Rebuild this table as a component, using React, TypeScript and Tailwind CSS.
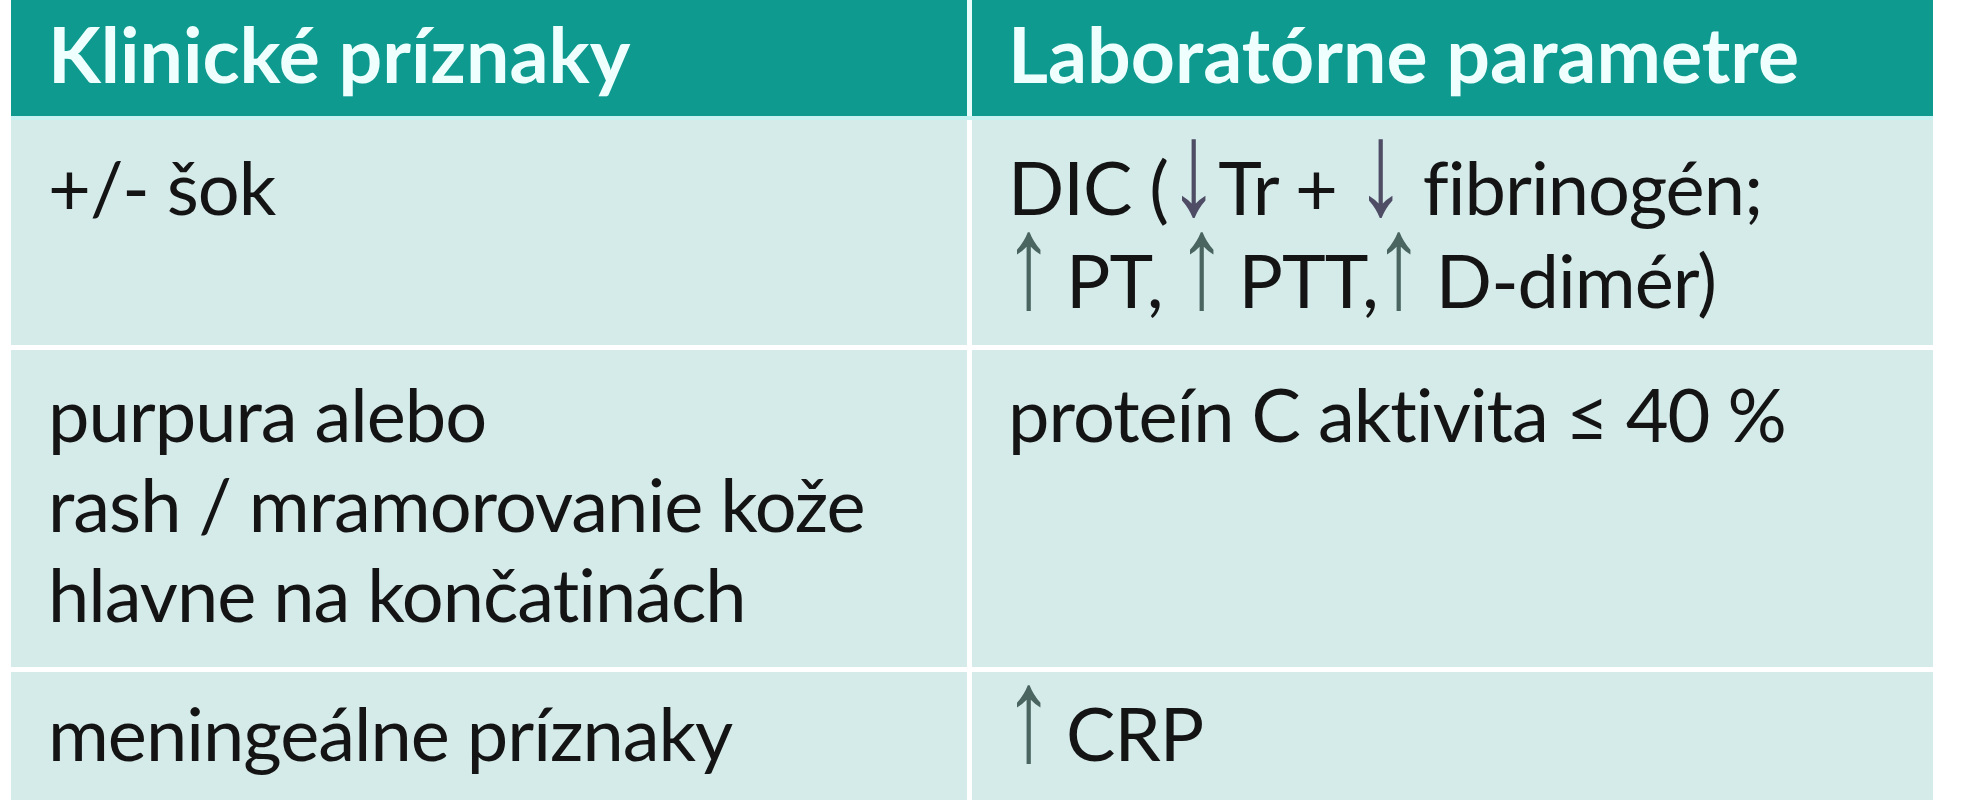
// arrows are taller than caps in the reference, so the glyph gets scaled
const arrow = "inline-block font-['Liberation_Sans',sans-serif] origin-[50%_71px] scale-x-[1.35] scale-y-[1.8]";
const Up = () => <span className={`${arrow} mx-[2px] text-[#4a6460]`}>↑</span>;
const Down = () => <span className={`${arrow} mx-[7px] text-[#4f4d66]`}>↓</span>;

const rows = [
  {
    h: "h-[225px]",
    pt: "pt-[22px]",
    left: ["+/- šok"],
    right: [
      <>DIC (<Down />Tr + <Down /> fibrinogén;</>,
      <><Up /> PT, <Up /> PTT,<Up /> D-dimér)</>,
    ],
  },
  {
    h: "h-[317px]",
    pt: "pt-[19px]",
    left: ["purpura alebo", "rash / mramorovanie kože", "hlavne na končatinách"],
    right: ["proteín C aktivita ≤ 40 %"],
  },
  {
    h: "h-[128px]",
    pt: "pt-[16px]",
    left: ["meningeálne príznaky"],
    right: [<><Up /> CRP</>],
  },
];

export default function App() {
  return (
    <div className="w-[1961px] h-[800px] overflow-hidden bg-white pl-[11px] font-['Lato',sans-serif]">
      <div className="w-[1922px] flex flex-col">
        <div className="flex gap-[5px] bg-[#e9fdfd] border-b-4 border-[#c6f3f1]">
          <div className="w-[956px] h-[116px] bg-[#0e9a8f] pl-[37px] pt-[7px] text-[77px] leading-[1.2] font-bold text-[#effffe]">
            Klinické príznaky
          </div>
          <div className="w-[961px] h-[116px] bg-[#0e9a8f] pl-[36px] pt-[7px] text-[77px] leading-[1.2] font-bold text-[#effffe]">
            Laboratórne parametre
          </div>
        </div>
        {rows.map((r, i) => (
          <div key={i} className={`flex gap-[5px] ${i > 0 ? "mt-[5px]" : ""}`}>
            <div className={`w-[956px] ${r.h} ${r.pt} bg-[#d5ebea] pl-[37px] text-[74px] leading-[90px] tracking-[-1px] text-[#141414]`}>
              {r.left.map((t, j) => (
                <div key={j} className="whitespace-nowrap">{t}</div>
              ))}
            </div>
            <div className={`w-[961px] ${r.h} ${r.pt} bg-[#d5ebea] pl-[36px] text-[74px] leading-[90px] tracking-[-1px] text-[#141414]`}>
              {r.right.map((t, j) => (
                <div key={j} className="whitespace-nowrap">{t}</div>
              ))}
            </div>
          </div>
        ))}
      </div>
    </div>
  );
}
